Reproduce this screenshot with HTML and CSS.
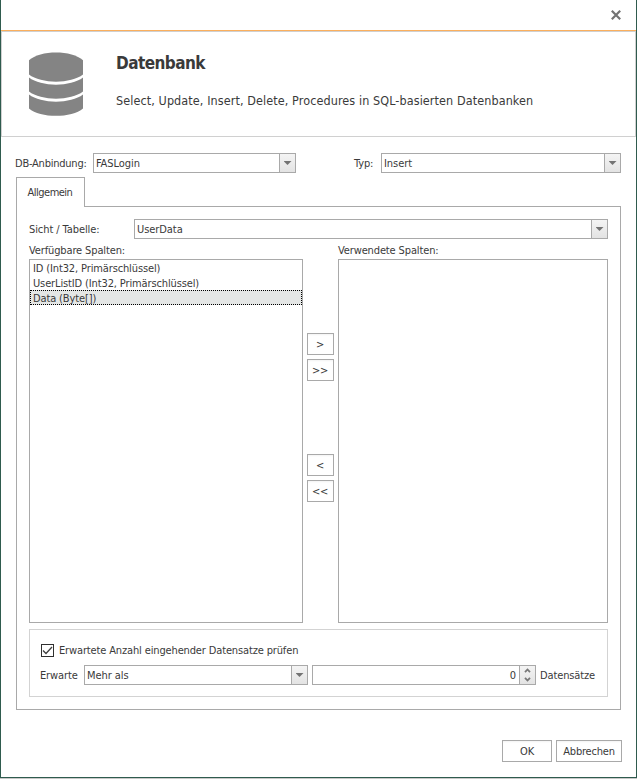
FILE: index.html
```html
<!DOCTYPE html>
<html lang="de">
<head>
<meta charset="utf-8">
<title>Datenbank</title>
<link rel="stylesheet" href="styles.css">
</head>
<body>
<div class="window">
  <div class="titlebar">
    <svg class="close" width="10" height="10" viewBox="0 0 10 10"><path d="M0.8 0.8L9.2 9.2M9.2 0.8L0.8 9.2" stroke="#737373" stroke-width="2.2"/></svg>
  </div>
  <header class="header">
    <svg class="db-icon" width="54" height="64" viewBox="0 0 54 64" fill="#848484">
      <path d="M0 8.300C11 -2.200 43 -2.200 54 8.300V22.500C42 32 12 32 0 22.500Z"/>
      <path d="M0 25.500C12 35 42 35 54 25.500V39.500C42 49 12 49 0 39.500Z"/>
      <path d="M0 42.500C12 52 42 52 54 42.500V56.500C43 66.300 11 66.300 0 56.500Z"/>
    </svg>
    <div class="heading">
      <h1 class="title">Datenbank</h1>
      <p class="subtitle">Select, Update, Insert, Delete, Procedures in SQL-basierten Datenbanken</p>
    </div>
  </header>
  <div class="top-row">
    <label class="label label-db">DB-Anbindung:</label>
    <div class="combo combo-db"><span class="value">FASLogin</span><span class="drop"><i class="arrow"></i></span></div>
    <label class="label label-type">Typ:</label>
    <div class="combo combo-type"><span class="value">Insert</span><span class="drop"><i class="arrow"></i></span></div>
  </div>
  <div class="tab">Allgemein</div>
  <main class="page">
    <div class="table-row">
      <label class="label label-table">Sicht / Tabelle:</label>
      <div class="combo combo-table"><span class="value">UserData</span><span class="drop"><i class="arrow"></i></span></div>
    </div>
    <div class="columns">
      <section class="col-left">
        <div class="caption">Verfügbare Spalten:</div>
        <ul class="list">
          <li>ID (Int32, Primärschlüssel)</li>
          <li>UserListID (Int32, Primärschlüssel)</li>
          <li class="selected">Data (Byte[])</li>
        </ul>
      </section>
      <div class="movers">
        <button class="btn mover">&gt;</button>
        <button class="btn mover">&gt;&gt;</button>
        <button class="btn mover mover-back">&lt;</button>
        <button class="btn mover">&lt;&lt;</button>
      </div>
      <section class="col-right">
        <div class="caption">Verwendete Spalten:</div>
        <ul class="list"></ul>
      </section>
    </div>
    <div class="group">
      <div class="check-row">
        <span class="checkbox"><svg width="11" height="11" viewBox="0 0 11 11"><path d="M1 5.500L4 8.500L10 2" fill="none" stroke="#404040" stroke-width="1.300"/></svg></span>
        <span class="check-text">Erwartete Anzahl eingehender Datensatze prüfen</span>
      </div>
      <div class="expect-row">
        <label class="label label-expect">Erwarte</label>
        <div class="combo combo-expect"><span class="value">Mehr als</span><span class="drop"><i class="arrow"></i></span></div>
        <div class="combo spin"><span class="value number">0</span><span class="drop spinner">
          <svg width="7" height="14" viewBox="0 0 7 14" fill="none" stroke="#777" stroke-width="1.800"><path d="M1 4.200L3.500 1.500L6 4.200M1 9.800L3.500 12.500L6 9.800"/></svg>
        </span></div>
        <span class="label label-records">Datensätze</span>
      </div>
    </div>
  </main>
  <footer class="footer">
    <button class="btn ok">OK</button>
    <button class="btn cancel">Abbrechen</button>
  </footer>
</div>
</body>
</html>
```
FILE: styles.css
```css
* { box-sizing: border-box; }
body {
  margin: 0;
  background: #c8c8c8;
  font-family: "DejaVu Sans Condensed", "DejaVu Sans", sans-serif;
  font-stretch: condensed;
  font-size: 11px;
  line-height: 14px;
  letter-spacing: -0.13px;
  color: #3a3a3a;
  white-space: nowrap;
}
.window {
  width: 637px;
  height: 778px;
  border: 1px solid #2f5b4e;
  border-top: 0;
  background: #fff;
}
.titlebar {
  height: 31px;
  border-bottom: 1px solid #fbaf5d;
  display: flex;
  justify-content: flex-end;
  padding: 10px 15px 0 0;
}
.header {
  height: 106px;
  border: 1px solid #d0d0d0;
  display: flex;
  padding: 20px 0 0 27px;
}
.heading { margin-left: 33px; }
.title { margin: 0; font-size: 17px; line-height: 22px; letter-spacing: -0.55px; }
.subtitle { margin: 19px 0 0; font-size: 12.5px; line-height: 16px; letter-spacing: 0.09px; }
.top-row { display: flex; align-items: center; padding: 16px 0 0 14px; height: 36px; }
.label { padding-top: 1px; }
.label-db { width: 78px; letter-spacing: -0.23px; }
.label-type { width: 27px; margin-left: 58px; }
.combo { height: 20px; display: flex; border: 1px solid #a9a9a9; background: #fff; }
.value { flex: 1; padding: 2px 3px 2px 2px; line-height: 15px; letter-spacing: -0.07px; }
.drop {
  width: 16px;
  border-left: 1px solid #a9a9a9;
  background: linear-gradient(#f4f4f4, #e3e3e3);
  display: flex;
  justify-content: center;
}
.arrow {
  width: 8px;
  height: 4px;
  margin-top: 7px;
  background: #737373;
  clip-path: polygon(0 0, 100% 0, 50% 100%);
}
.combo-db { width: 203px; }
.combo-type { width: 240px; }
.tab {
  position: relative;
  z-index: 1;
  width: 69px;
  height: 30px;
  margin: 4px 0 -1px 15px;
  border: 1px solid #a9a9a9;
  border-bottom: 0;
  background: #fff;
  padding: 8px 0 0 10.5px;
  letter-spacing: -0.5px;
}
.page {
  width: 605px;
  height: 504px;
  margin-left: 15px;
  border: 1px solid #a9a9a9;
  padding: 12px;
}
.table-row { display: flex; align-items: center; height: 20px; }
.label-table { width: 105px; letter-spacing: -0.08px; }
.combo-table { width: 474px; }
.columns { display: flex; height: 384px; }
.col-left { width: 274px; }
.col-right { width: 270px; }
.caption { height: 20px; padding-top: 5px; }
.list {
  list-style: none;
  margin: 0;
  padding: 0;
  height: 364px;
  border: 1px solid #a9a9a9;
}
.list li { height: 15px; line-height: 15px; padding: 1px 3px 0; }
.list .selected { background: #e4e6e5; border: 1px dotted #000; padding: 0 2px; }
.movers { width: 35px; padding: 94px 4px 0; display: flex; flex-direction: column; gap: 4px; }
.btn {
  height: 22px;
  padding: 1px 0 0;
  border: 1px solid #a9a9a9;
  border-radius: 0;
  background: linear-gradient(#f3f3f3, #fff 2px);
  font: inherit;
  letter-spacing: -0.2px;
  color: inherit;
}
.mover { width: 27px; padding: 2px 1px 0 0; font-size: 11px; letter-spacing: -0.2px; }
.mover-back { margin-top: 69px; }
.group {
  height: 68px;
  margin-top: 6px;
  border: 1px solid #d3d3d3;
  padding: 13px 0 0 11px;
}
.check-row { display: flex; align-items: center; height: 15px; gap: 5px; }
.check-text { letter-spacing: -0.14px; }
.checkbox { width: 13px; height: 13px; border: 1px solid #303030; display: flex; }
.expect-row { display: flex; align-items: center; margin: 7px 0 0 -1px; }
.label-expect { width: 44px; }
.combo-expect { width: 224px; }
.spin { width: 224px; margin: 0 4px; }
.number { text-align: right; }
.spinner { padding-top: 2px; }
.footer { display: flex; justify-content: flex-end; gap: 4px; margin-top: 30px; padding-right: 14px; }
.ok { width: 50px; }
.cancel { width: 66px; }
```
